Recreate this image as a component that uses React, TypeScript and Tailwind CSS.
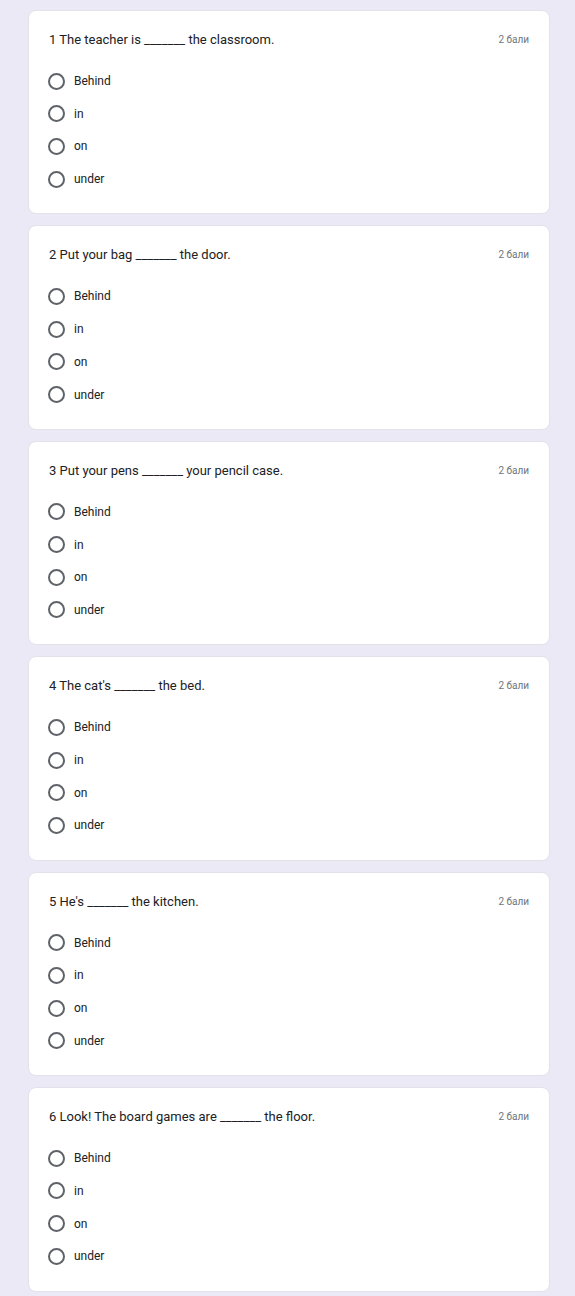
const QUESTIONS = [
  '1 The teacher is _______ the classroom.',
  '2 Put your bag _______ the door.',
  '3 Put your pens _______ your pencil case.',
  "4 The cat's _______ the bed.",
  "5 He's _______ the kitchen.",
  '6 Look! The board games are _______ the floor.',
];

const OPTIONS = ['Behind', 'in', 'on', 'under'];

function QuestionCard({ title }: { title: string }) {
  return (
    <div className="w-[522px] rounded-lg border border-[#e3e1ea] bg-white px-[20px] pt-[20px] pb-[18px]">
      <div className="flex items-center justify-between">
        <p className="text-[13px] leading-[18px] text-[#202124]">{title}</p>
        <span className="text-[10px] leading-[18px] text-[#70757a]">2 бали</span>
      </div>
      <div className="mt-[15.7px] -ml-px flex flex-col">
        {OPTIONS.map(opt => (
          <label key={opt} className="flex h-[32.7px] items-center">
            <span className="block h-[17px] w-[17px] rounded-full border-2 border-[#5f6368]" />
            <span className="ml-[9px] text-[12px] text-[#202124]">{opt}</span>
          </label>
        ))}
      </div>
    </div>
  );
}

export default function App() {
  return (
    <div
      className="min-h-[1296px] bg-[#ece9f7] pt-[10px] pl-[28px]"
      style={{ fontFamily: 'Roboto, "Liberation Sans", sans-serif' }}
    >
      <div className="flex flex-col gap-[11px]">
        {QUESTIONS.map(q => (
          <QuestionCard key={q} title={q} />
        ))}
      </div>
    </div>
  );
}
